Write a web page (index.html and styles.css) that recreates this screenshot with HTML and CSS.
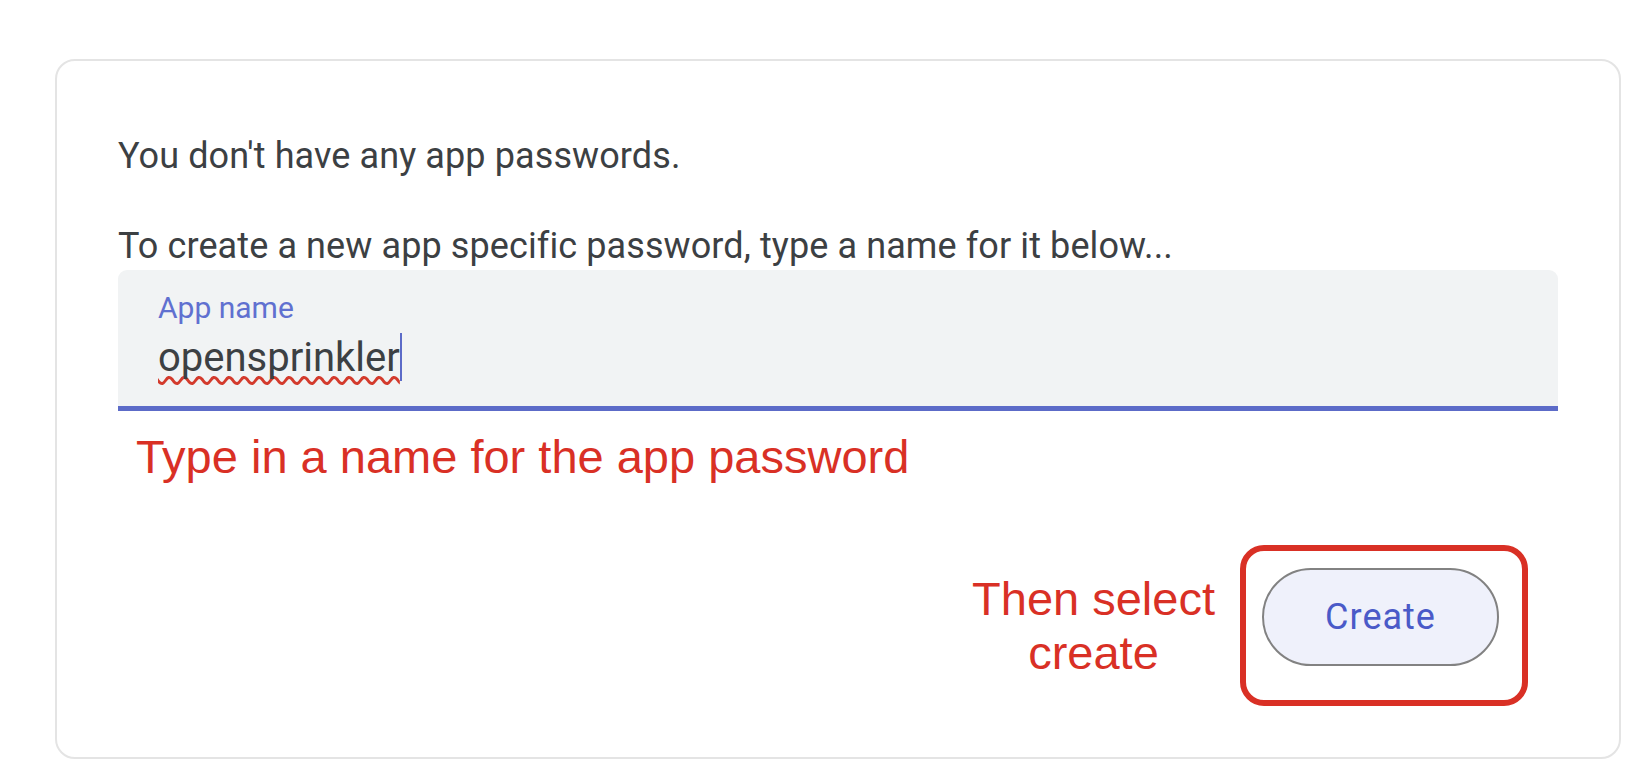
FILE: index.html
```html
<!DOCTYPE html>
<html lang="en">
<head>
<meta charset="utf-8">
<title>App passwords</title>
<link rel="stylesheet" href="styles.css">
</head>
<body>
<div class="card">
  <p class="msg msg-first">You don't have any app passwords.</p>
  <p class="msg msg-second">To create a new app specific password, type a name for it below...</p>
  <div class="field">
    <div class="field-label">App name</div>
    <div class="field-input"><span class="typed">opensprinkler</span><span class="caret"></span></div>
  </div>
  <div class="note">Type in a name for the app password</div>
  <div class="action-row">
    <div class="note note-center">Then select<br>create</div>
    <div class="highlight">
      <button class="create-btn" type="button">Create</button>
    </div>
  </div>
</div>
</body>
</html>
```

FILE: styles.css
```css
html, body {
  margin: 0;
  padding: 0;
  background: #ffffff;
}

body {
  font-family: Roboto, "Noto Sans", Arial, sans-serif;
  padding: 59px 19px 0 55px;
  width: 1640px;
  height: 763px;
  box-sizing: border-box;
  overflow: hidden;
}

.card {
  box-sizing: border-box;
  width: 1566px;
  height: 700px;
  border: 2px solid #e4e4e4;
  border-radius: 20px;
  padding: 74px 61px 0 61px;
  display: flex;
  flex-direction: column;
}

.msg {
  margin: 0;
  font-size: 36px;
  line-height: 42px;
  color: #3c4043;
  letter-spacing: 0.1px;
}

.msg-second {
  margin-top: 48px;
}

.field {
  margin-top: 3px;
  background: #f1f3f4;
  border-radius: 9px 9px 0 0;
  border-bottom: 5px solid #5c6bc8;
  padding: 20px 40px 25px 40px;
}

.field-label {
  font-size: 30px;
  line-height: 35px;
  color: #6070d0;
}

.field-input {
  margin-top: 8px;
  font-size: 40px;
  line-height: 47px;
  color: #3c4043;
  display: flex;
  align-items: center;
}

.typed {
  text-decoration: underline wavy #d33a2c;
  text-decoration-thickness: 2.5px;
  text-decoration-skip-ink: none;
  text-underline-offset: 5px;
}

.caret {
  display: inline-block;
  width: 2px;
  height: 48px;
  background: #5c6bc8;
  margin-left: 0;
}

.note {
  font-family: "Liberation Sans", Arial, sans-serif;
  font-size: 47px;
  line-height: 54px;
  color: #d93025;
  margin-top: 19px;
  padding-left: 18px;
}

.action-row {
  margin-top: 61px;
  display: flex;
  justify-content: flex-end;
  align-items: center;
  gap: 25px;
  padding-right: 30px;
}

.note-center {
  margin: 0;
  padding: 0;
  text-align: center;
}

.highlight {
  box-sizing: border-box;
  width: 288px;
  height: 161px;
  border: 6px solid #d93025;
  border-radius: 24px;
  padding: 17px 23px 34px 16px;
}

.create-btn {
  box-sizing: border-box;
  width: 237px;
  height: 98px;
  border: 2px solid #828282;
  border-radius: 49px;
  background: #eff1fb;
  color: #4a5ac8;
  font-family: Roboto, "Noto Sans", Arial, sans-serif;
  font-size: 36px;
  font-weight: 400;
  letter-spacing: 1px;
  padding: 0;
  cursor: pointer;
}
```
